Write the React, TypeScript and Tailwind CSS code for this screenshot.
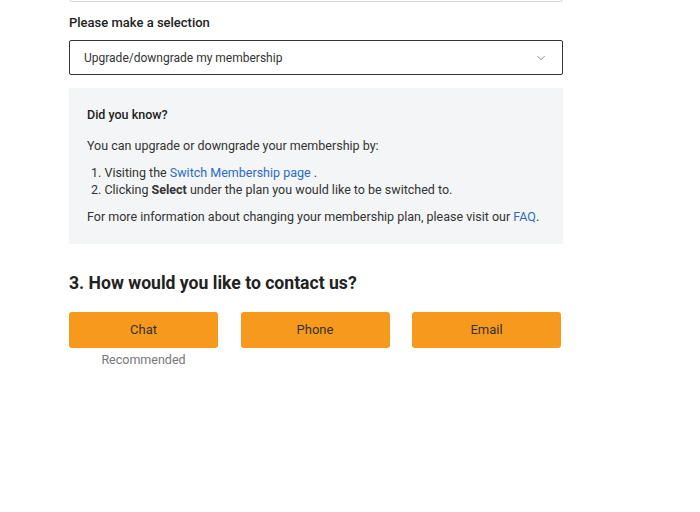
import { ChevronDown } from "lucide-react";

const options = ["Chat", "Phone", "Email"];

export default function App() {
  return (
    <div className="min-h-[512px] w-[700px] bg-white font-['Roboto',sans-serif] text-[#333]">
      <div className="ml-[69px] w-[494px]">
        {/* bottom of the previous field */}
        <div className="-mt-[10px] h-[12px] rounded-b-[3px] border border-t-0 border-[#d6d6d6]" />

        <label className="mt-[12px] block text-[13px] font-medium leading-[18px] text-[#222]">
          Please make a selection
        </label>
        <button className="mt-[8px] flex h-[35px] w-full items-center justify-between rounded-[2px] border border-[#333] bg-white pl-[14px] pr-[14px] text-left text-[12px] text-[#333]">
          <span>Upgrade/downgrade my membership</span>
          <ChevronDown className="h-[14px] w-[14px] text-[#888]" strokeWidth={1.5} />
        </button>

        <div className="mt-[13px] bg-[#f4f5f6] px-[18px] pb-[19px] pt-[18px] text-[12.5px] leading-[17px] text-[#333]">
          <p className="font-medium text-[#222]">Did you know?</p>
          <p className="mt-[14px]">You can upgrade or downgrade your membership by:</p>
          <ol className="mt-[10px] pl-[4px]">
            <li>
              1. Visiting the{" "}
              <a href="#" className="text-[#2b6cc4]">
                Switch Membership page
              </a>{" "}
              .
            </li>
            <li>
              2. Clicking <span className="font-bold">Select</span> under the plan you would like to be switched to.
            </li>
          </ol>
          <p className="mt-[10px]">
            For more information about changing your membership plan, please visit our{" "}
            <a href="#" className="text-[#2b6cc4]">
              FAQ
            </a>
            .
          </p>
        </div>

        <h2 className="mt-[27px] text-[17.6px] font-bold leading-[24px] text-[#222]">
          3. How would you like to contact us?
        </h2>

        <div className="mt-[17px] flex w-[492px] justify-between">
          {options.map((o) => (
            <div key={o} className="flex w-[149px] flex-col items-center">
              <button className="h-[36px] w-full rounded-[3px] bg-[#f7991d] text-[13px] text-[#333]">
                {o}
              </button>
              {o === "Chat" && (
                <span className="mt-[3px] text-[12.5px] text-[#777]">Recommended</span>
              )}
            </div>
          ))}
        </div>
      </div>
    </div>
  );
}
